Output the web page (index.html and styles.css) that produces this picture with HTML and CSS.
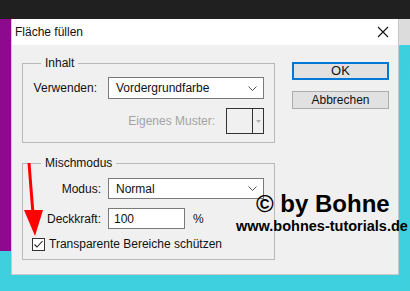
FILE: index.html
```html
<!DOCTYPE html>
<html lang="de">
  <head>
    <meta charset="UTF-8" />
    <title>Fläche füllen</title>
    <link rel="stylesheet" href="styles.css">
  </head>
  <body>
    <div class="dialog">
      <div class="titlebar">
        <span class="title">Fläche füllen</span>
        <svg class="close" width="12" height="12" viewBox="0 0 12 12">
          <path d="M1 1 L11 11 M11 1 L1 11" stroke="#111" stroke-width="1.1" fill="none" />
        </svg>
      </div>
      <div class="content">
        <div class="groups">
          <fieldset class="group inhalt">
            <legend>Inhalt</legend>
            <div class="row first">
              <label class="lbl lbl-wide">Verwenden:</label>
              <div class="select">
                <span>Vordergrundfarbe</span>
                <svg width="9" height="5" viewBox="0 0 9 5"><path d="M0.5 0.5 L4.5 4.5 L8.5 0.5" stroke="#555" fill="none" /></svg>
              </div>
            </div>
            <div class="row pattern">
              <span class="muted">Eigenes Muster:</span>
              <div class="swatch">
                <div class="swatch-box"></div>
                <div class="swatch-arrow">
                  <svg width="5" height="3" viewBox="0 0 5 3"><path d="M0 0 L5 0 L2.5 3 Z" fill="#b0b0b0" /></svg>
                </div>
              </div>
            </div>
          </fieldset>

          <fieldset class="group misch">
            <legend>Mischmodus</legend>
            <div class="row first">
              <label class="lbl">Modus:</label>
              <div class="select small">
                <span>Normal</span>
                <svg width="9" height="5" viewBox="0 0 9 5"><path d="M0.5 0.5 L4.5 4.5 L8.5 0.5" stroke="#555" fill="none" /></svg>
              </div>
            </div>
            <div class="row second">
              <label class="lbl">Deckkraft:</label>
              <div class="input">100</div>
              <span class="unit">%</span>
            </div>
            <div class="row check">
              <svg class="checkbox" width="13" height="13" viewBox="0 0 13 13">
                <rect x="0.5" y="0.5" width="12" height="12" fill="#fff" stroke="#333" />
                <path d="M2.5 6.5 L5 9 L10.5 3" stroke="#222" stroke-width="1.1" fill="none" />
              </svg>
              <span>Transparente Bereiche schützen</span>
            </div>
          </fieldset>
        </div>

        <div class="buttons">
          <div class="btn primary">OK</div>
          <div class="btn">Abbrechen</div>
        </div>
      </div>
    </div>

    <svg class="arrow" width="30" height="80" viewBox="0 0 30 80">
      <path d="M7 1 L11 52" stroke="#f00" stroke-width="3" fill="none" />
      <path d="M2 48 L21 48 L13 74 Z" fill="#f00" />
    </svg>

    <div class="watermark">
      <div class="wm-big">© by Bohne</div>
      <div class="wm-url">www.bohnes-tutorials.de</div>
    </div>
  </body>
</html>
```

FILE: styles.css
```css
* {
  margin: 0;
  padding: 0;
  box-sizing: border-box;
}

body {
  width: 410px;
  height: 291px;
  overflow: hidden;
  position: relative;
  font-family: "Liberation Sans", Arial, sans-serif;
  font-size: 12px;
  color: #111;
  background:
    linear-gradient(#202020, #202020) 0 0 / 410px 19px no-repeat,
    linear-gradient(#8d0a8e, #8d0a8e) 0 19px / 11px 232px no-repeat,
    linear-gradient(#dcdcdc, #dcdcdc) 399px 19px / 11px 26px no-repeat,
    linear-gradient(160deg, #3aa9b8 0%, #3aa9b8 40%, #3ccfdd 41%, #3fd0de 100%);
  padding: 19px 0 0 11px;
}

.dialog {
  width: 388px;
  height: 256px;
  background: #f0f0f0;
  border: 1px solid #c8c8c8;
  border-top: none;
}

.titlebar {
  height: 26px;
  background: #fff;
  display: flex;
  align-items: center;
  justify-content: space-between;
  padding: 0 9px 0 3px;
}

.title {
  font-size: 12px;
  color: #111;
}

.content {
  display: flex;
  padding: 11px 0 0 10px;
}

.groups {
  width: 253px;
}

.group {
  border: 1px solid #b9b9b9;
  border-radius: 0;
}

.group legend {
  margin-left: 18px;
  padding: 0 4px;
  line-height: 14px;
  font-size: 12px;
}

.row {
  display: flex;
  align-items: center;
}

.lbl {
  width: 78px;
  text-align: right;
  margin-right: 7px;
}

.lbl-wide {
  width: 74px;
  margin-right: 11px;
}

.inhalt .first {
  margin-top: 7px;
}

.select {
  width: 156px;
  height: 22px;
  background: #fff;
  border: 1px solid #7a7a7a;
  display: flex;
  align-items: center;
  justify-content: space-between;
  padding: 0 6px 0 7px;
}

.select.small {
  height: 21px;
}

.pattern {
  margin-top: 9px;
  justify-content: flex-end;
  padding-right: 10px;
  margin-bottom: 8px;
}

.muted {
  color: #a3a3a3;
  margin-right: 11px;
}

.swatch {
  width: 38px;
  height: 26px;
  border: 1px solid #333;
  display: flex;
  background: #f0f0f0;
}

.swatch-box {
  width: 26px;
  border-right: 1px solid #333;
}

.swatch-arrow {
  flex: 1;
  display: flex;
  align-items: center;
  justify-content: center;
}

.misch {
  margin-top: 13px;
}

.misch .first {
  margin-top: 8px;
}

.second {
  margin-top: 9px;
}

.input {
  width: 77px;
  height: 21px;
  background: #fff;
  border: 1px solid #7a7a7a;
  padding: 3px 0 0 5px;
}

.unit {
  margin-left: 8px;
}

.check {
  margin-top: 8px;
  padding-left: 9px;
  margin-bottom: 8px;
}

.checkbox {
  margin-right: 4px;
}

.buttons {
  margin-left: 17px;
  padding-top: 6px;
  display: flex;
  flex-direction: column;
  gap: 11px;
}

.btn {
  width: 97px;
  height: 18px;
  background: #e1e1e1;
  border: 1px solid #adadad;
  text-align: center;
  line-height: 16px;
}

.btn.primary {
  border: 2px solid #0078d7;
  line-height: 14px;
  font-size: 13px;
}

.arrow {
  position: absolute;
  left: 22px;
  top: 162px;
}

.watermark {
  position: absolute;
  left: 236px;
  top: 190px;
  font-weight: bold;
  color: #000;
  white-space: nowrap;
}

.wm-big {
  font-size: 24px;
  line-height: 28px;
  margin-left: 20px;
}

.wm-url {
  font-size: 14.5px;
  line-height: 17px;
}
```
